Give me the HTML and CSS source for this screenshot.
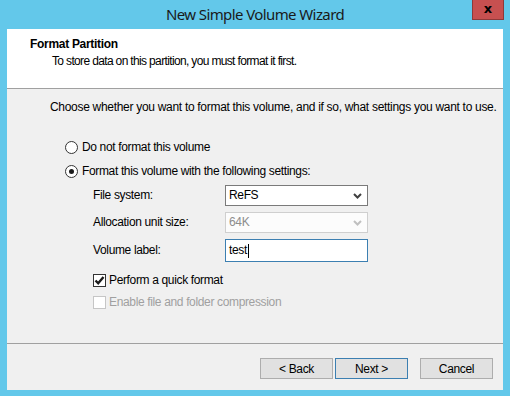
FILE: index.html
```html
<!DOCTYPE html>
<html lang="en">
<head>
    <meta charset="UTF-8">
    <title>New Simple Volume Wizard</title>
    <link rel="stylesheet" href="styles.css">
</head>
<body>
    <div class="window">
        <div class="titlebar">
            <span class="title">New Simple Volume Wizard</span>
            <span class="close">x</span>
        </div>
        <div class="client">
            <header class="header">
                <h1 class="header-title">Format Partition</h1>
                <p class="header-sub">To store data on this partition, you must format it first.</p>
            </header>

            <main class="content">
                <p class="intro">Choose whether you want to format this volume, and if so, what settings you want to use.</p>

                <div class="options">
                    <div class="option">
                        <span class="radio"></span>
                        <span>Do not format this volume</span>
                    </div>
                    <div class="option">
                        <span class="radio checked"></span>
                        <span>Format this volume with the following settings:</span>
                    </div>

                    <div class="settings">
                        <span class="field-label">File system:</span>
                        <div class="combo">
                            <span>ReFS</span>
                            <svg class="chevron" width="9" height="6" viewBox="0 0 9 6"><polyline points="1,1 4.5,4.5 8,1" fill="none" stroke="#404040" stroke-width="2"/></svg>
                        </div>

                        <span class="field-label">Allocation unit size:</span>
                        <div class="combo disabled">
                            <span>64K</span>
                            <svg class="chevron" width="9" height="6" viewBox="0 0 9 6"><polyline points="1,1 4.5,4.5 8,1" fill="none" stroke="#c0c0c0" stroke-width="2"/></svg>
                        </div>

                        <span class="field-label">Volume label:</span>
                        <div class="textbox"><span>test</span><span class="caret"></span></div>
                    </div>

                    <div class="checks">
                        <div class="check-row">
                            <span class="checkbox">
                                <svg width="11" height="11" viewBox="0 0 11 11"><polyline points="1.5,5.5 4.2,8.3 9.5,2" fill="none" stroke="#1a1a1a" stroke-width="2.4"/></svg>
                            </span>
                            <span>Perform a quick format</span>
                        </div>
                        <div class="check-row disabled">
                            <span class="checkbox"></span>
                            <span>Enable file and folder compression</span>
                        </div>
                    </div>
                </div>
            </main>

            <footer class="footer">
                <button class="btn">&lt; Back</button>
                <button class="btn default">Next &gt;</button>
                <button class="btn cancel">Cancel</button>
            </footer>
        </div>
    </div>
</body>
</html>
```

FILE: styles.css
```css
* {
    margin: 0;
    padding: 0;
    box-sizing: border-box;
}

body {
    font-family: 'Liberation Sans', Arial, sans-serif;
    font-size: 12px;
    line-height: 15px;
    letter-spacing: -0.35px;
    color: #000;
    background: #63c8ea;
}

.window {
    width: 510px;
    height: 396px;
    background: #63c8ea;
    padding: 0 7px 6px 7px;
    display: flex;
    flex-direction: column;
}

.titlebar {
    height: 29px;
    position: relative;
    display: flex;
    align-items: center;
    justify-content: center;
}

.title {
    font-family: 'Noto Sans', sans-serif;
    font-size: 15px;
    letter-spacing: -0.6px;
    color: #1a1a1a;
    margin-top: -1px;
}

.close {
    position: absolute;
    top: 0;
    right: -1px;
    width: 32px;
    height: 20px;
    background: #c75050;
    border: 1px solid #8e3a3a;
    border-top: none;
    color: #000;
    font-family: 'DejaVu Sans', sans-serif;
    font-weight: bold;
    font-size: 13px;
    line-height: 17px;
    letter-spacing: 0;
    text-align: center;
}

.client {
    flex: 1;
    background: #f0f0f0;
    display: flex;
    flex-direction: column;
}

.header {
    height: 60px;
    background: #fff;
    border-bottom: 1px solid #a0a0a0;
    padding: 8px 0 0 23px;
}

.header-title {
    font-size: 12px;
    font-weight: bold;
    line-height: 15px;
    letter-spacing: -0.3px;
}

.header-sub {
    padding: 2px 0 0 22px;
    letter-spacing: -0.65px;
}

.content {
    height: 254px;
    padding: 11px 0 0 43px;
}

.intro {
    letter-spacing: -0.3px;
}

.options {
    padding: 20px 0 0 15px;
}

.option {
    height: 24px;
    display: flex;
    align-items: center;
    gap: 4px;
}

.radio {
    width: 13px;
    height: 13px;
    border: 1px solid #333;
    border-radius: 50%;
    background: #fff;
    display: flex;
    align-items: center;
    justify-content: center;
}

.radio.checked::after {
    content: '';
    width: 5px;
    height: 5px;
    border-radius: 50%;
    background: #1a1a1a;
}

.settings {
    display: grid;
    grid-template-columns: 132px 143px;
    grid-template-rows: 21px 21px 23px;
    row-gap: 6px;
    align-items: center;
    padding: 2px 0 0 28px;
}

.combo,
.textbox {
    height: 100%;
    background: #fff;
    border: 1px solid #7a7a7a;
    display: flex;
    align-items: center;
    justify-content: space-between;
    padding: 0 5px 0 3px;
}

.combo.disabled {
    border-color: #cfcfcf;
    color: #8d8d8d;
    background: #fcfcfc;
}

.textbox {
    border-color: #3c7fb1;
    justify-content: flex-start;
}

.caret {
    width: 1px;
    height: 14px;
    background: #000;
    margin-left: 1px;
}

.checks {
    padding: 7px 0 0 28px;
}

.check-row {
    height: 22px;
    display: flex;
    align-items: center;
    gap: 3px;
}

.checkbox {
    width: 13px;
    height: 13px;
    border: 1px solid #333;
    background: #fff;
    display: flex;
    align-items: center;
    justify-content: center;
}

.check-row.disabled {
    color: #a0a0a0;
}

.check-row.disabled .checkbox {
    border-color: #c6c6c6;
}

.footer {
    flex: 1;
    border-top: 1px solid #a0a0a0;
    display: flex;
    justify-content: flex-end;
    align-items: flex-start;
    gap: 2px;
    padding: 14px 10px 0 0;
}

.btn {
    width: 73px;
    height: 21px;
    font-family: 'Liberation Sans', Arial, sans-serif;
    font-size: 12px;
    letter-spacing: -0.35px;
    color: #000;
    background: #e1e1e1;
    border: 1px solid #adadad;
}

.btn.default {
    border-color: #3c7fb1;
}

.btn.cancel {
    margin-left: 10px;
}
```
